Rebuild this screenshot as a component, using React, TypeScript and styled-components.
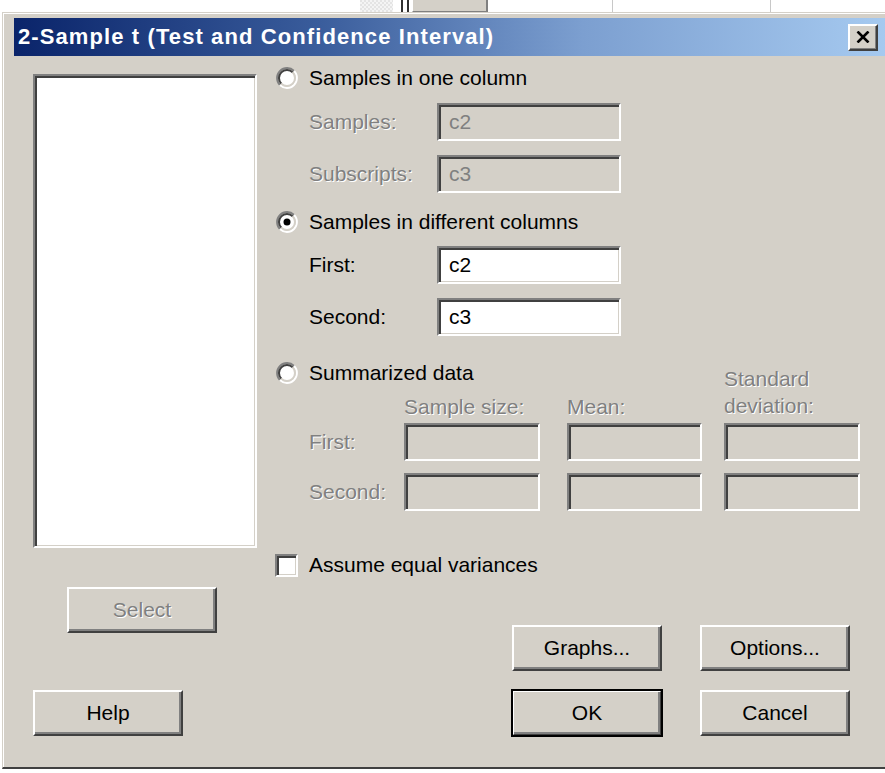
import React from 'react';
import styled, { createGlobalStyle } from 'styled-components';

const FACE = '#d4d0c8';
const SHADOW = '#808080';
const DARK = '#404040';

const GlobalStyle = createGlobalStyle`
  html, body {
    margin: 0;
    padding: 0;
    background: #fff;
    overflow: hidden;
  }
  body {
    font-family: 'Liberation Sans', Arial, sans-serif;
    font-size: 21px;
    color: #000;
  }
`;

/* strip of the worksheet that shows behind the dialog */
const SheetStrip = styled.div`
  display: flex;
  height: 12px;
  background: #fff;
`;

const SheetCell = styled.div<{ $w: number; $kind?: 'blank' | 'hatch' | 'rule' | 'header' | 'grid' }>`
  flex: 0 0 ${(p) => p.$w}px;
  height: 100%;
  box-sizing: border-box;
  ${(p) => p.$kind === 'hatch' && `
    background-color: #e4e4e4;
    background-image: linear-gradient(45deg, #f4f4f4 25%, transparent 25%, transparent 75%, #f4f4f4 75%),
      linear-gradient(45deg, #f4f4f4 25%, transparent 25%, transparent 75%, #f4f4f4 75%);
    background-size: 4px 4px;
    background-position: 0 0, 2px 2px;
  `}
  ${(p) => p.$kind === 'rule' && `background: #303030;`}
  ${(p) => p.$kind === 'header' && `
    background: ${FACE};
    border-left: 1px solid #fff;
    border-right: 2px solid ${SHADOW};
    border-bottom: 1px solid ${SHADOW};
  `}
  ${(p) => p.$kind === 'grid' && `border-right: 1px solid #c8c8c8;`}
`;

const Window = styled.div`
  box-sizing: border-box;
  width: 891px;
  margin-left: 2px;
  background: ${FACE};
  border-left: 1px solid ${FACE};
  border-top: 1px solid ${FACE};
  border-bottom: 2px solid ${DARK};
  box-shadow: inset 1px 1px 0 #fff;
  padding: 5px 4px 0 11px;
`;

const TitleBar = styled.div`
  display: flex;
  align-items: center;
  justify-content: space-between;
  height: 38px;
  padding: 0 11px 0 4px;
  background: linear-gradient(90deg, #0a246a 0%, #3a5d9c 35%, #7c9fd0 65%, #a6caf0 100%);
`;

const TitleText = styled.div`
  color: #fff;
  font-weight: bold;
  font-size: 22px;
  letter-spacing: 1.1px;
  white-space: nowrap;
`;

const CloseButton = styled.div`
  box-sizing: border-box;
  width: 30px;
  height: 27px;
  display: flex;
  align-items: center;
  justify-content: center;
  background: ${FACE};
  border-top: 2px solid #fff;
  border-left: 2px solid #fff;
  border-right: 2px solid ${DARK};
  border-bottom: 2px solid ${DARK};
  box-shadow: inset -1px -1px 0 ${SHADOW};
`;

const Client = styled.div`
  display: flex;
  gap: 18px;
  padding: 10px 0 31px 19px;
`;

const LeftColumn = styled.div`
  display: flex;
  flex-direction: column;
  width: 224px;
`;

const ListBox = styled.div`
  box-sizing: border-box;
  margin-top: 8px;
  height: 474px;
  background: #fff;
  border-top: 2px solid ${SHADOW};
  border-left: 2px solid ${SHADOW};
  border-right: 2px solid #fff;
  border-bottom: 2px solid #fff;
  box-shadow: inset 2px 2px 0 ${DARK}, inset -1px -1px 0 ${FACE};
`;

const RightColumn = styled.div`
  display: flex;
  flex-direction: column;
  width: 585px;
`;

const Button = styled.div<{ $disabled?: boolean; $default?: boolean }>`
  box-sizing: border-box;
  width: 150px;
  height: 46px;
  display: flex;
  align-items: center;
  justify-content: center;
  background: ${FACE};
  border-top: 2px solid #fff;
  border-left: 2px solid #fff;
  border-right: 2px solid ${DARK};
  border-bottom: 2px solid ${DARK};
  box-shadow: inset -2px -2px 0 ${SHADOW};
  color: ${(p) => (p.$disabled ? SHADOW : '#000')};
  text-shadow: ${(p) => (p.$disabled ? '1px 1px 0 #fff' : 'none')};
  ${(p) => p.$default && `outline: 2px solid #000; outline-offset: -1px;`}
`;

const SelectButton = styled(Button)`
  margin: 39px 0 0 34px;
`;

const HelpButton = styled(Button)`
  margin-top: auto;
`;

const OptionRow = styled.div<{ $top: number }>`
  display: flex;
  align-items: center;
  height: 24px;
  margin-top: ${(p) => p.$top}px;
`;

const RadioBox = styled.svg`
  flex: 0 0 auto;
  margin-left: 1px;
`;

const CheckBox = styled.div<{ $checked?: boolean }>`
  box-sizing: border-box;
  width: 23px;
  height: 23px;
  background: #fff;
  border-top: 2px solid ${SHADOW};
  border-left: 2px solid ${SHADOW};
  border-right: 2px solid #fff;
  border-bottom: 2px solid #fff;
  box-shadow: inset 2px 2px 0 ${DARK}, inset -1px -1px 0 ${FACE};
`;

const OptionText = styled.span`
  margin-left: 11px;
  white-space: nowrap;
`;

const FieldRow = styled.div<{ $top: number }>`
  display: flex;
  align-items: center;
  margin-top: ${(p) => p.$top}px;
  padding-left: 34px;
`;

const Label = styled.span<{ $disabled?: boolean; $width?: number }>`
  ${(p) => p.$width !== undefined && `flex: 0 0 ${p.$width}px;`}
  white-space: nowrap;
  line-height: 24px;
  color: ${(p) => (p.$disabled ? SHADOW : '#000')};
  text-shadow: ${(p) => (p.$disabled ? '1px 1px 0 #fff' : 'none')};
`;

const TextField = styled.div<{ $disabled?: boolean; $width: number }>`
  box-sizing: border-box;
  width: ${(p) => p.$width}px;
  height: 38px;
  display: flex;
  align-items: center;
  padding-left: 10px;
  background: ${(p) => (p.$disabled ? FACE : '#fff')};
  color: ${(p) => (p.$disabled ? SHADOW : '#000')};
  border-top: 2px solid ${SHADOW};
  border-left: 2px solid ${SHADOW};
  border-right: 2px solid #fff;
  border-bottom: 2px solid #fff;
  box-shadow: inset 2px 2px 0 ${DARK}, inset -1px -1px 0 ${FACE};
`;

const SummaryHead = styled.div`
  display: grid;
  grid-template-columns: 129px 163px 157px 136px;
  grid-template-rows: 24px 38px;
  margin-top: 25px;
`;

const SummaryOption = styled(OptionRow)`
  grid-column: 1 / 4;
  grid-row: 1;
  margin-top: 0;
`;

const ColumnHead = styled.div<{ $col: number; $span?: boolean }>`
  grid-column: ${(p) => p.$col};
  grid-row: ${(p) => (p.$span ? '1 / 3' : '2')};
  align-self: end;
  padding-bottom: 4px;
  line-height: ${(p) => (p.$span ? 27 : 24)}px;
  color: ${SHADOW};
  text-shadow: 1px 1px 0 #fff;
`;

const SummaryFields = styled.div`
  display: grid;
  grid-template-columns: 129px 163px 157px 136px;
  grid-auto-rows: 38px;
  row-gap: 12px;
  align-items: center;
`;

const RowLabel = styled(Label)`
  padding-left: 34px;
`;

const ButtonGrid = styled.div`
  display: grid;
  grid-template-columns: 150px 150px;
  column-gap: 38px;
  row-gap: 19px;
  margin: 48px 10px 0 auto;
`;

const Radio: React.FC<{ checked?: boolean }> = ({ checked }) => (
  <RadioBox width={22} height={22} viewBox="0 0 22 22">
    <circle cx={11} cy={11} r={8} fill="#fff" />
    <path d="M3.93 18.07 A10 10 0 0 1 18.07 3.93" stroke={SHADOW} strokeWidth={2} fill="none" />
    <path d="M18.07 3.93 A10 10 0 0 1 3.93 18.07" stroke="#fff" strokeWidth={2} fill="none" />
    <path d="M5.34 16.66 A8 8 0 0 1 16.66 5.34" stroke={DARK} strokeWidth={2} fill="none" />
    <path d="M16.66 5.34 A8 8 0 0 1 5.34 16.66" stroke={FACE} strokeWidth={2} fill="none" />
    {checked && <circle cx={11} cy={11} r={3.5} fill="#000" />}
  </RadioBox>
);

const CloseIcon = () => (
  <svg width={14} height={12} viewBox="0 0 14 12">
    <path d="M1.5 0.5 L12.5 11.5 M12.5 0.5 L1.5 11.5" stroke="#000" strokeWidth={2.6} />
  </svg>
);

export default function App() {
  return (
    <>
      <GlobalStyle />
      <SheetStrip>
        <SheetCell $w={360} />
        <SheetCell $w={33} $kind="hatch" />
        <SheetCell $w={8} />
        <SheetCell $w={2} $kind="rule" />
        <SheetCell $w={4} />
        <SheetCell $w={2} $kind="rule" />
        <SheetCell $w={3} />
        <SheetCell $w={76} $kind="header" />
        <SheetCell $w={125} $kind="grid" />
        <SheetCell $w={158} $kind="grid" />
        <SheetCell $w={120} />
      </SheetStrip>

      <Window>
        <TitleBar>
          <TitleText>2-Sample t (Test and Confidence Interval)</TitleText>
          <CloseButton>
            <CloseIcon />
          </CloseButton>
        </TitleBar>

        <Client>
          <LeftColumn>
            <ListBox />
            <SelectButton $disabled>Select</SelectButton>
            <HelpButton>Help</HelpButton>
          </LeftColumn>

          <RightColumn>
            <OptionRow $top={0}>
              <Radio />
              <OptionText>Samples in one column</OptionText>
            </OptionRow>
            <FieldRow $top={13}>
              <Label $disabled $width={128}>Samples:</Label>
              <TextField $disabled $width={184}>c2</TextField>
            </FieldRow>
            <FieldRow $top={14}>
              <Label $disabled $width={128}>Subscripts:</Label>
              <TextField $disabled $width={184}>c3</TextField>
            </FieldRow>

            <OptionRow $top={17}>
              <Radio checked />
              <OptionText>Samples in different columns</OptionText>
            </OptionRow>
            <FieldRow $top={12}>
              <Label $width={128}>First:</Label>
              <TextField $width={184}>c2</TextField>
            </FieldRow>
            <FieldRow $top={14}>
              <Label $width={128}>Second:</Label>
              <TextField $width={184}>c3</TextField>
            </FieldRow>

            <SummaryHead>
              <SummaryOption $top={0}>
                <Radio />
                <OptionText>Summarized data</OptionText>
              </SummaryOption>
              <ColumnHead $col={2}>Sample size:</ColumnHead>
              <ColumnHead $col={3}>Mean:</ColumnHead>
              <ColumnHead $col={4} $span>
                Standard
                <br />
                deviation:
              </ColumnHead>
            </SummaryHead>
            <SummaryFields>
              <RowLabel $disabled>First:</RowLabel>
              <TextField $disabled $width={136} />
              <TextField $disabled $width={135} />
              <TextField $disabled $width={136} />
              <RowLabel $disabled>Second:</RowLabel>
              <TextField $disabled $width={136} />
              <TextField $disabled $width={135} />
              <TextField $disabled $width={136} />
            </SummaryFields>

            <OptionRow $top={42}>
              <CheckBox />
              <OptionText>Assume equal variances</OptionText>
            </OptionRow>

            <ButtonGrid>
              <Button>Graphs...</Button>
              <Button>Options...</Button>
              <Button $default>OK</Button>
              <Button>Cancel</Button>
            </ButtonGrid>
          </RightColumn>
        </Client>
      </Window>
    </>
  );
}
